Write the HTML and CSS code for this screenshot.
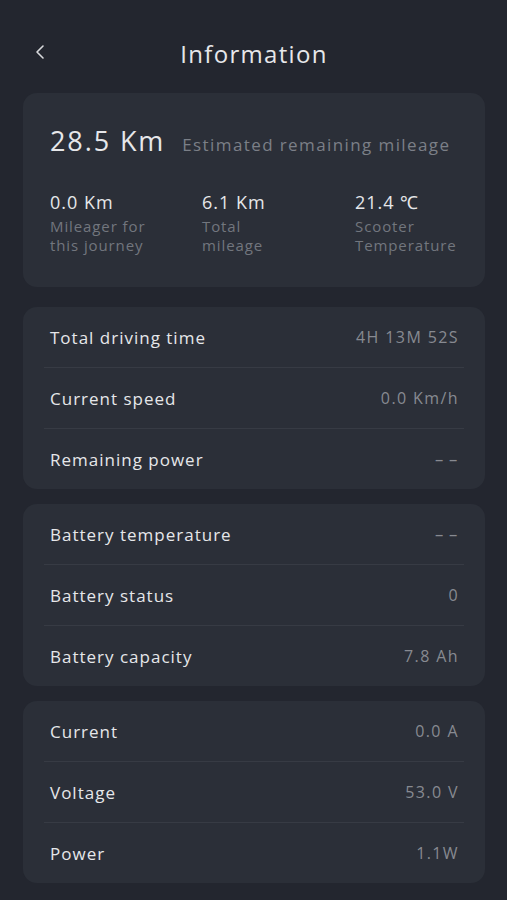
FILE: index.html
```html
<!DOCTYPE html>
<html lang="en">

<head>
    <meta charset="UTF-8">
    <meta name="viewport" content="width=device-width, initial-scale=1.0">
    <title>Information</title>
    <link rel="stylesheet" href="styles.css">
</head>

<body>
    <div class="page">
        <div class="header">
            <div class="back">
                <svg width="14" height="16" viewBox="0 0 14 16"><path d="M10 2 L4 8 L10 14" fill="none" stroke="#d8d9dc" stroke-width="1.6" stroke-linecap="round" stroke-linejoin="round"/></svg>
            </div>
            <div class="title">Information</div>
        </div>

        <div class="card summary">
            <div class="main">
                <span class="big">28.5 Km</span>
                <span class="big-label">Estimated remaining mileage</span>
            </div>
            <div class="stats">
                <div class="stat">
                    <div class="stat-val">0.0 Km</div>
                    <div class="stat-label">Mileager for this journey</div>
                </div>
                <div class="stat">
                    <div class="stat-val">6.1 Km</div>
                    <div class="stat-label">Total mileage</div>
                </div>
                <div class="stat">
                    <div class="stat-val">21.4 ℃</div>
                    <div class="stat-label">Scooter Temperature</div>
                </div>
            </div>
        </div>

        <div class="card list first">
            <div class="row"><span class="name">Total driving time</span><span class="val">4H 13M 52S</span></div>
            <div class="row"><span class="name">Current speed</span><span class="val">0.0 Km/h</span></div>
            <div class="row"><span class="name">Remaining power</span><span class="val dash">--</span></div>
        </div>

        <div class="card list">
            <div class="row"><span class="name">Battery temperature</span><span class="val dash">--</span></div>
            <div class="row"><span class="name">Battery status</span><span class="val">0</span></div>
            <div class="row"><span class="name">Battery capacity</span><span class="val">7.8 Ah</span></div>
        </div>

        <div class="card list">
            <div class="row"><span class="name">Current</span><span class="val">0.0 A</span></div>
            <div class="row"><span class="name">Voltage</span><span class="val">53.0 V</span></div>
            <div class="row"><span class="name">Power</span><span class="val">1.1W</span></div>
        </div>
    </div>
</body>

</html>
```

FILE: styles.css
```css
body {
    margin: 0;
    background-color: #23262f;
    font-family: "Open Sans", "Liberation Sans", sans-serif;
    color: #e6e7ea;
}

.page {
    padding: 0 22px 20px 23px;
}

.header {
    height: 93px;
    display: flex;
    align-items: center;
    justify-content: center;
    position: relative;
}

.back {
    position: absolute;
    left: 10px;
    top: 43px;
}

.title {
    font-size: 24px;
    letter-spacing: 1.3px;
    margin-top: 14px;
    margin-left: 0;
}

.card {
    background-color: #2b2f38;
    border-radius: 14px;
}

.summary {
    height: 194px;
    padding: 0 0 0 27px;
    box-sizing: border-box;
}

.main {
    display: flex;
    align-items: baseline;
    padding-top: 29px;
}

.big {
    font-size: 27px;
    letter-spacing: 1.9px;
}

.big-label {
    font-size: 17px;
    color: #7b7f87;
    margin-left: 17px;
    letter-spacing: 1.4px;
}

.stats {
    display: grid;
    grid-template-columns: 152px 153px 1fr;
    margin-top: 31px;
}

.stat-val {
    font-size: 18px;
    letter-spacing: 1px;
}

.stat-label {
    font-size: 15px;
    line-height: 19px;
    color: #72767e;
    width: 104px;
    margin-top: 3px;
    letter-spacing: 0.9px;
}

.list {
    margin-top: 15px;
    padding: 0 21px;
}

.list.first {
    margin-top: 20px;
}

.row {
    height: 60px;
    display: flex;
    align-items: center;
    justify-content: space-between;
    padding: 0 6px;
    border-bottom: 1px solid #373b44;
}

.row:last-child {
    border-bottom: none;
}

.name {
    font-size: 17px;
    letter-spacing: 1px;
}

.val {
    font-size: 16px;
    color: #878a91;
    letter-spacing: 1.4px;
    margin-right: -1px;
}

.val.dash {
    display: inline-block;
    font-size: 18px;
    letter-spacing: 3px;
    margin-right: -5px;
    transform: scaleX(1.6);
    transform-origin: right center;
}
```
